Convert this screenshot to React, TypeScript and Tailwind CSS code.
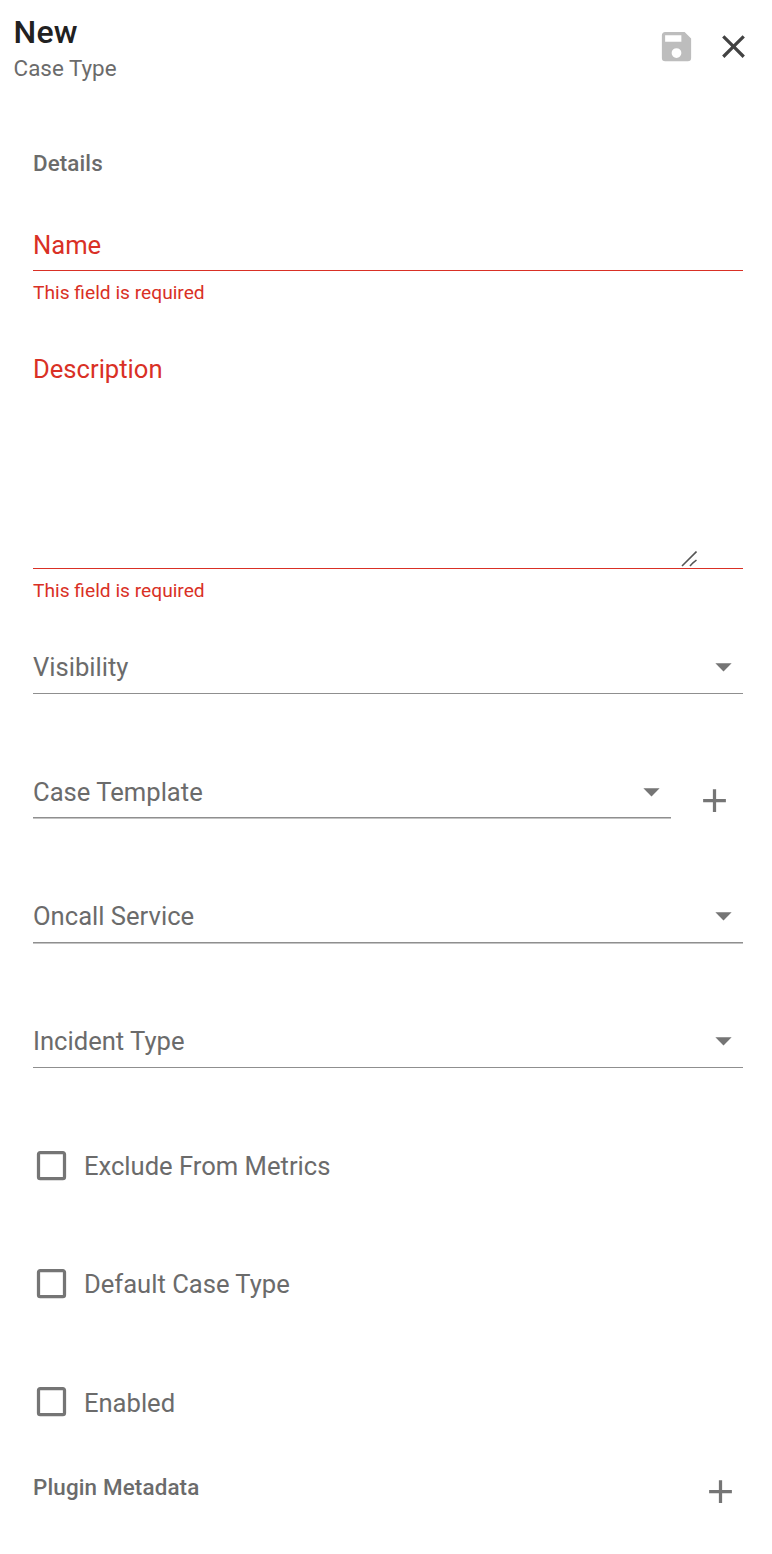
import type { ReactNode } from "react";

const icons = {
  save: "M15,9H5V5H15M12,19A3,3 0 0,1 9,16A3,3 0 0,1 12,13A3,3 0 0,1 15,16A3,3 0 0,1 12,19M17,3H5C3.89,3 3,3.9 3,5V19A2,2 0 0,0 5,21H19A2,2 0 0,0 21,19V7L17,3Z",
  close:
    "M19,6.41L17.59,5L12,10.59L6.41,5L5,6.41L10.59,12L5,17.59L6.41,19L12,13.41L17.59,19L19,17.59L13.41,12L19,6.41Z",
  plus: "M19,13H13V19H11V13H5V11H11V5H13V11H19V13Z",
  menuDown: "M7,10L12,15L17,10H7Z",
  checkbox:
    "M19,3H5C3.89,3 3,3.89 3,5V19A2,2 0 0,0 5,21H19A2,2 0 0,0 21,19V5C21,3.89 20.1,3 19,3M19,5V19H5V5H19Z",
};

function Icon({ name, className = "" }: { name: keyof typeof icons; className?: string }) {
  return (
    <svg viewBox="0 0 24 24" className={`size-[39px] shrink-0 fill-current ${className}`} aria-hidden="true">
      <path d={icons[name]} />
    </svg>
  );
}

function ErrorText({ children }: { children: ReactNode }) {
  return <p className="mt-[10px] text-[19.2px] leading-6 text-[#d93025]">{children}</p>;
}

function SelectField({ label, className = "" }: { label: string; className?: string }) {
  return (
    <div className={`flex items-start justify-between border-b border-[#8f8f8f] ${className}`}>
      <span className="leading-8">{label}</span>
      <Icon name="menuDown" className="-mt-1 text-[#757575]" />
    </div>
  );
}

function Checkbox({ label, className = "" }: { label: string; className?: string }) {
  return (
    <label className={`-ml-[0.5px] flex h-[39px] gap-[12.5px] ${className}`}>
      <Icon name="checkbox" className="-ml-[0.1px] text-[#757575]" />
      <span>{label}</span>
    </label>
  );
}

export default function App() {
  return (
    <main className="h-[1554px] w-[772px] overflow-hidden bg-white font-['Roboto',sans-serif] text-[25.6px] text-[#6b6b6b]">
      <header className="flex h-[90px] justify-between pl-[13.6px] pr-[19px]">
        <div className="pt-3">
          <h1 className="text-[32px] font-medium leading-10 tracking-[0.2px] text-[#212121]">New</h1>
          <p className="mt-0.5 text-[22.4px] leading-7">Case Type</p>
        </div>
        <div className="flex gap-[18px] pt-[27px]">
          <Icon name="save" className="text-[#bdbdbd]" />
          <Icon name="close" className="text-[#424242]" />
        </div>
      </header>

      <form className="pl-[33px] pr-[29px]">
        <h2 className="mt-[59px] text-[22.4px] font-medium leading-7 tracking-[0.1px]">Details</h2>

        <div className="mt-[52px] h-[42px] border-b border-[#d93025] leading-8 text-[#d93025]">Name</div>
        <ErrorText>This field is required</ErrorText>

        <div className="mt-12 flex h-[216px] items-end justify-between border-b border-[#d93025] pr-[46px] text-[#d93025]">
          <span className="self-start leading-8">Description</span>
          <svg viewBox="0 0 16 16" className="mb-[1px] size-4 fill-none stroke-[#555555]" aria-hidden="true">
            <path d="M1 15L15.5 0.5M9 15L12 11.8L15.5 9" strokeWidth="1.6" />
          </svg>
        </div>
        <ErrorText>This field is required</ErrorText>

        <SelectField label="Visibility" className="mt-12 h-[43px]" />

        <div className="mt-[82px] flex items-start">
          <SelectField label="Case Template" className="h-[42px] w-[638px] shadow-[0_1px_0_#c4c4c4]" />
          <Icon name="plus" className="-mb-[1px] ml-6 mt-[5px] text-[#757575]" />
        </div>

        <SelectField label="Oncall Service" className="mt-[81px] h-[43px] shadow-[0_1px_0_#c4c4c4]" />
        <SelectField label="Incident Type" className="mt-[82px] h-[43px]" />

        <Checkbox label="Exclude From Metrics" className="mt-[78px] leading-[41px]" />
        <Checkbox label="Default Case Type" className="mt-[79px] leading-[41px]" />
        <Checkbox label="Enabled" className="mt-[79px] leading-[43px]" />

        <div className="mt-[51px] flex items-start justify-between pr-[3px]">
          <h2 className="mt-[1px] text-[22.4px] font-medium leading-7 tracking-[0.15px]">Plugin Metadata</h2>
          <Icon name="plus" className="text-[#757575]" />
        </div>
      </form>
    </main>
  );
}
